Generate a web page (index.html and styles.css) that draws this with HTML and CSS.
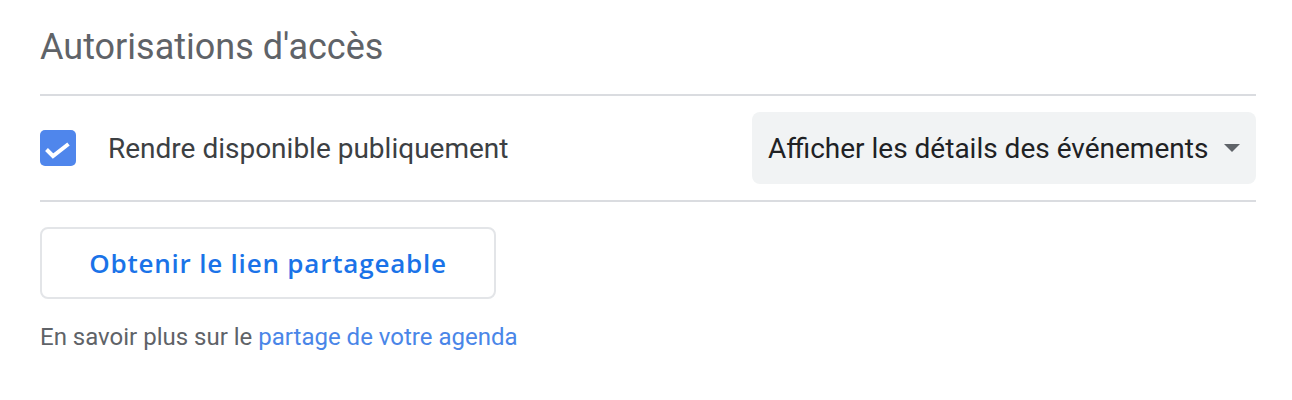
FILE: index.html
```html
<!DOCTYPE html>
<html lang="fr">
<head>
<meta charset="utf-8">
<link rel="stylesheet" href="styles.css">
</head>
<body>
<section class="panel">
  <h2 class="title">Autorisations d'accès</h2>
  <div class="row">
    <label class="check">
      <span class="box">
        <svg viewBox="0 0 36 36" width="36" height="36"><path d="M6.5 19.5 L13 26 L28.5 14" fill="none" stroke="#fff" stroke-width="4"/></svg>
      </span>
      <span class="check-label">Rendre disponible publiquement</span>
    </label>
    <div class="select">
      <span class="select-text">Afficher les détails des événements</span>
      <svg class="arrow" viewBox="0 0 16 8" width="16" height="8"><path d="M0 0 L16 0 L8 8 Z" fill="#5f6368"/></svg>
    </div>
  </div>
  <div class="actions">
    <button class="share-btn">Obtenir le lien partageable</button>
  </div>
  <p class="help">En savoir plus sur le <a href="#" class="link">partage de votre agenda</a></p>
</section>
</body>
</html>
```
FILE: styles.css
```css
html, body {
  margin: 0;
  padding: 0;
  background: #fff;
}
body {
  font-family: Roboto, "Liberation Sans", sans-serif;
}
.panel {
  width: 1216px;
  margin-left: 40px;
  padding-top: 24px;
}
.title {
  margin: 0;
  font-weight: 400;
  font-size: 36px;
  line-height: 46px;
  color: #5f6368;
  padding-bottom: 24px;
  border-bottom: 2px solid #dadce0;
}
.row {
  display: flex;
  align-items: center;
  justify-content: space-between;
  padding: 16px 0 16px 0;
  border-bottom: 2px solid #dadce0;
}
.check {
  display: flex;
  align-items: center;
  gap: 32px;
}
.box {
  width: 36px;
  height: 36px;
  border-radius: 5px;
  background: #4f86ec;
  display: flex;
}
.check-label {
  font-size: 28px;
  color: #3c4043;
}
.select {
  width: 504px;
  height: 72px;
  box-sizing: border-box;
  background: #f1f3f4;
  border-radius: 8px;
  display: flex;
  align-items: center;
  justify-content: space-between;
  padding: 0 16px 0 16px;
}
.select-text {
  font-size: 28px;
  color: #202124;
}
.actions {
  padding-top: 25px;
}
.share-btn {
  width: 456px;
  height: 72px;
  box-sizing: border-box;
  background: #fff;
  border: 2px solid #e3e5e8;
  border-radius: 8px;
  font-family: "Open Sans", Roboto, sans-serif;
  font-weight: 600;
  font-size: 26px;
  letter-spacing: 0.8px;
  color: #1a73e8;
  padding: 0;
}
.help {
  margin: 24px 0 0 0;
  font-size: 24px;
  color: #5f6368;
}
.link {
  color: #4a86e8;
  text-decoration: none;
}
```
